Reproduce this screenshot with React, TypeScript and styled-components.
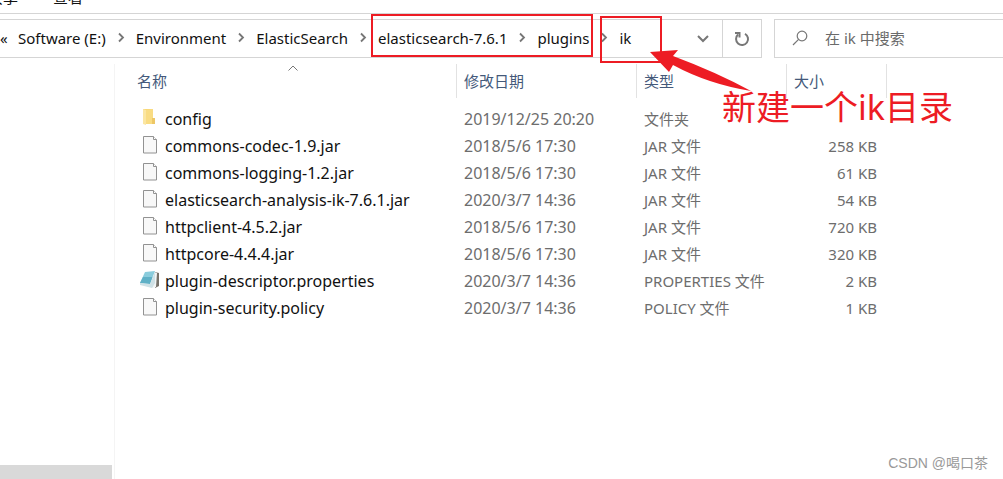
import React from "react";
import styled, { createGlobalStyle } from "styled-components";

const RED = "#ed1c24";

const GlobalStyle = createGlobalStyle`
  *, *::before, *::after { box-sizing: border-box; }
  body {
    margin: 0;
    background: #fff;
    color: #111;
    font: 15px/20px "Noto Sans", "Noto Sans CJK SC", sans-serif;
  }
  button, input { font: inherit; color: inherit; border: 0; padding: 0; background: none; }
  button { cursor: pointer; white-space: nowrap; }
`;

const Page = styled.div`
  position: relative;
  display: flex;
  flex-direction: column;
  min-height: 100vh;
  overflow: hidden;
`;

const Ribbon = styled.nav`
  display: flex;
  align-items: flex-end;
  gap: 35px;
  height: 14px;
  padding-bottom: 6px;
  margin-left: -12px;
  overflow: hidden;
  border-bottom: 1px solid #d5d5d5;
`;

const RibbonTab = styled.button`
  flex: none;
  height: 20px;
`;

const Toolbar = styled.div`
  display: flex;
  gap: 12px;
  padding-top: 5px;
`;

const AddressBar = styled.div`
  display: flex;
  flex: 1;
  height: 39px;
  border: 1px solid #d5d5d5;
  border-left: 0;
`;

const Crumbs = styled.ol`
  display: flex;
  flex: 1;
  align-items: center;
  margin: 0;
  padding: 0 0 2px;
  list-style: none;
`;

const Crumb = styled.li`
  display: flex;
  align-items: center;
`;

const Overflow = styled.button`
  width: 18px;
  text-align: left;
`;

const Separator = styled.svg`
  width: 30px;
  height: 12px;
`;

const AddressButton = styled.button<{ $divided?: boolean }>`
  display: flex;
  align-items: center;
  justify-content: center;
  width: 39px;
  border-left: ${(p) => (p.$divided ? "1px solid #d5d5d5" : "0")};
`;

const Search = styled.label`
  display: flex;
  align-items: center;
  gap: 17px;
  width: 229px;
  height: 39px;
  padding: 0 0 2px 17px;
  border: 1px solid #d5d5d5;
  border-right: 0;
`;

const SearchInput = styled.input`
  flex: 1;
  min-width: 0;
  outline: 0;
  &::placeholder { color: #6a6a6a; opacity: 1; }
`;

const Body = styled.div`
  display: flex;
  flex: 1;
  padding-top: 6px;
`;

const Sidebar = styled.aside`
  display: flex;
  flex: none;
  align-items: flex-end;
  width: 115px;
  border-right: 1px solid #f4f4f4;
`;

const ScrollThumb = styled.div`
  width: 112px;
  height: 14px;
  background: #d9d9d9;
`;

const Files = styled.main`
  flex: 1;
  padding-left: 15px;
`;

const FileTable = styled.table`
  width: 757px;
  table-layout: fixed;
  border-collapse: separate;
  border-spacing: 0;
`;

const HeadCell = styled.th<{ $width: number }>`
  position: relative;
  width: ${(p) => p.$width}px;
  height: 34px;
  padding: 0 0 0 7px;
  border-right: 1px solid #e2e2e2;
  color: #44597a;
  font-weight: 400;
  text-align: left;
`;

const SortMark = styled.svg`
  position: absolute;
  top: 1px;
  left: 0;
  right: 0;
  margin: 0 auto;
  width: 10px;
  height: 6px;
`;

const Cell = styled.td<{ $right?: boolean; $large?: boolean }>`
  height: 27px;
  padding: 0 ${(p) => (p.$right ? "10px" : "0")} 0 7px;
  color: #6d6d6d;
  font-size: ${(p) => (p.$large ? "16px" : "15px")};
  text-align: ${(p) => (p.$right ? "right" : "left")};
  white-space: nowrap;
`;

const Spacer = styled.tr`
  height: 7px;
`;

const FileName = styled.button`
  display: flex;
  align-items: center;
  gap: 4px;
  height: 27px;
  padding-left: 2px;
  color: #111;
`;

const FileIcon = styled.svg`
  width: 22px;
  height: 21px;
`;

const Frame = styled.div<{ $x: number; $y: number; $w: number; $h: number }>`
  position: absolute;
  left: ${(p) => p.$x}px;
  top: ${(p) => p.$y}px;
  width: ${(p) => p.$w}px;
  height: ${(p) => p.$h}px;
  border: 2px solid ${RED};
  pointer-events: none;
`;

const Arrow = styled.svg`
  position: absolute;
  left: 650px;
  top: 48px;
  width: 104px;
  height: 46px;
  pointer-events: none;
`;

const Note = styled.p`
  position: absolute;
  left: 722px;
  top: 90px;
  margin: 0;
  color: ${RED};
  font-size: 34px;
  line-height: 34px;
  white-space: nowrap;
`;

const Watermark = styled.span`
  position: absolute;
  right: 15px;
  bottom: 6px;
  color: #999;
  font-family: "Liberation Sans", "Noto Sans CJK SC", sans-serif;
  font-size: 14px;
`;

type Kind = "folder" | "file" | "notepad";

const files: { name: string; kind: Kind; date: string; type: string; size: string }[] = [
  { name: "config", kind: "folder", date: "2019/12/25 20:20", type: "文件夹", size: "" },
  { name: "commons-codec-1.9.jar", kind: "file", date: "2018/5/6 17:30", type: "JAR 文件", size: "258 KB" },
  { name: "commons-logging-1.2.jar", kind: "file", date: "2018/5/6 17:30", type: "JAR 文件", size: "61 KB" },
  { name: "elasticsearch-analysis-ik-7.6.1.jar", kind: "file", date: "2020/3/7 14:36", type: "JAR 文件", size: "54 KB" },
  { name: "httpclient-4.5.2.jar", kind: "file", date: "2018/5/6 17:30", type: "JAR 文件", size: "720 KB" },
  { name: "httpcore-4.4.4.jar", kind: "file", date: "2018/5/6 17:30", type: "JAR 文件", size: "320 KB" },
  { name: "plugin-descriptor.properties", kind: "notepad", date: "2020/3/7 14:36", type: "PROPERTIES 文件", size: "2 KB" },
  { name: "plugin-security.policy", kind: "file", date: "2020/3/7 14:36", type: "POLICY 文件", size: "1 KB" },
];

const crumbs = ["Software (E:)", "Environment", "ElasticSearch", "elasticsearch-7.6.1", "plugins", "ik"];

function KindIcon({ kind }: { kind: Kind }) {
  if (kind === "folder") {
    return (
      <FileIcon viewBox="0 0 22 21" aria-hidden="true">
        <path d="M4 1h9v15H4z" fill="#f8d775" />
        <path d="M4 1l3 1v15l-3-1z" fill="#fbe6a2" />
        <path d="M13 1h1v9h2v6H7V2z" fill="#f9dc83" />
        <path d="M13 10h3v6h-3z" fill="#edc766" />
      </FileIcon>
    );
  }
  if (kind === "notepad") {
    return (
      <FileIcon viewBox="0 0 22 21" aria-hidden="true">
        <path d="M16 2l4 1v13l-4 2z" fill="#77726a" />
        <path d="M15 2l3 1-1 14-4 1z" fill="#f1f5f6" />
        <path d="M6 2l10-1-5 13-10-1z" fill="#8accdc" />
        <path d="M4 7l9.500 0-2.500 7-10-1z" fill="#5fb0c6" />
        <path d="M1 13l10 1 5-12v11l-3 5-12-3z" fill="#cfe1e6" />
      </FileIcon>
    );
  }
  return (
    <FileIcon viewBox="0 0 22 21" aria-hidden="true">
      <path d="M4.500 1.500h10l3 3v13.500h-13z" fill="#f8f8f8" stroke="#929292" />
      <path d="M14.500 1.500v3h3" fill="#fff" stroke="#929292" />
    </FileIcon>
  );
}

export default function App() {
  return (
    <Page>
      <GlobalStyle />
      <Ribbon>
        <RibbonTab>共享</RibbonTab>
        <RibbonTab>查看</RibbonTab>
      </Ribbon>
      <Toolbar>
        <AddressBar>
          <Crumbs>
            <Crumb><Overflow>«</Overflow></Crumb>
            {crumbs.map((name, i) => (
              <Crumb key={name}>
                {i > 0 && (
                  <Separator viewBox="0 0 30 12" fill="none" stroke="#777" strokeWidth="1.800" aria-hidden="true">
                    <path d="M13 1.500l4 4-4 4" />
                  </Separator>
                )}
                <button>{name}</button>
              </Crumb>
            ))}
          </Crumbs>
          <AddressButton aria-label="历史记录">
            <svg width="12" height="8" viewBox="0 0 12 8" fill="none" stroke="#777" strokeWidth="2">
              <path d="M1 1l5 5 5-5" />
            </svg>
          </AddressButton>
          <AddressButton $divided aria-label="刷新">
            <svg width="16" height="16" viewBox="0 0 16 16" fill="none" stroke="#777" strokeWidth="2">
              <path d="M11 2.800A6 6 0 1 1 4 3.600" />
              <path d="M1 2h4.500v4.500" />
            </svg>
          </AddressButton>
        </AddressBar>
        <Search>
          <svg width="16" height="16" viewBox="0 0 16 16" fill="none" stroke="#777" strokeWidth="1.200" aria-hidden="true">
            <circle cx="10" cy="6" r="4.800" />
            <path d="M6.600 9.400L1 15" />
          </svg>
          <SearchInput type="text" aria-label="搜索" placeholder="在 ik 中搜索" />
        </Search>
      </Toolbar>
      <Body>
        <Sidebar><ScrollThumb /></Sidebar>
        <Files>
          <FileTable>
            <thead>
              <tr>
                <HeadCell $width={327}>
                  <button>名称</button>
                  <SortMark viewBox="0 0 10 6" fill="none" stroke="#777" aria-hidden="true">
                    <path d="M.5 5.500L5 1l4.500 4.500" />
                  </SortMark>
                </HeadCell>
                <HeadCell $width={180}><button>修改日期</button></HeadCell>
                <HeadCell $width={150}><button>类型</button></HeadCell>
                <HeadCell $width={100}><button>大小</button></HeadCell>
              </tr>
            </thead>
            <tbody>
              <Spacer />
              {files.map((f) => (
                <tr key={f.name}>
                  <Cell $large><FileName><KindIcon kind={f.kind} />{f.name}</FileName></Cell>
                  <Cell $large>{f.date}</Cell>
                  <Cell>{f.type}</Cell>
                  <Cell $right>{f.size}</Cell>
                </tr>
              ))}
            </tbody>
          </FileTable>
        </Files>
      </Body>
      <Frame $x={371} $y={14} $w={222} $h={43} />
      <Frame $x={600} $y={16} $w={62} $h={47} />
      <Arrow viewBox="0 0 104 46" aria-hidden="true">
        <path d="M0 4L28 2L23 8Q66 24 101 43Q58 36 23 17L19 24z" fill={RED} />
      </Arrow>
      <Note>新建一个ik目录</Note>
      <Watermark>CSDN @喝口茶</Watermark>
    </Page>
  );
}
